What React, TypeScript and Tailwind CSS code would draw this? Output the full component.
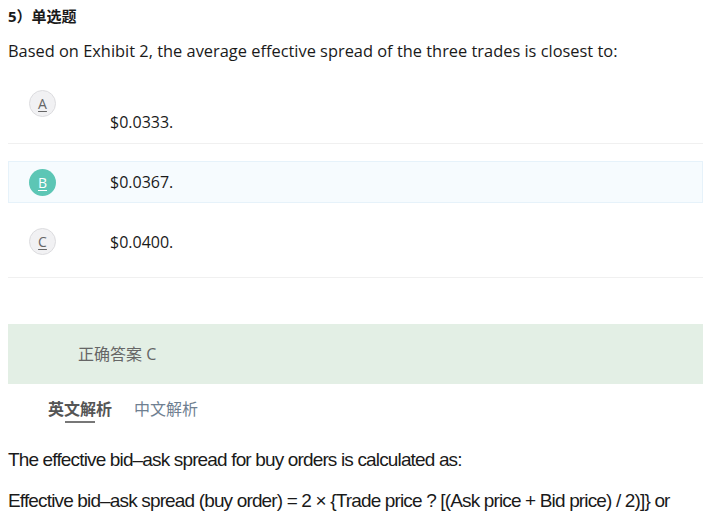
const OPTIONS = [
  { key: "A", text: "$0.0333." },
  { key: "B", text: "$0.0367." },
  { key: "C", text: "$0.0400." },
];

const FONT = { fontFamily: '"Open Sans", "Noto Sans CJK SC", sans-serif' };
const NARROW = { fontFamily: '"Liberation Sans", sans-serif' };

function Badge({ letter, selected }: { letter: string; selected: boolean }) {
  return (
    <div
      className={`flex h-[27px] w-[27px] shrink-0 items-center justify-center rounded-full text-[14px] underline underline-offset-2 ${
        selected
          ? "bg-[#5cc6b5] text-white"
          : "border border-[#dcdcdf] bg-[#f1f1f3] text-[#666]"
      }`}
    >
      {letter}
    </div>
  );
}

export default function App() {
  return (
    <div className="min-h-[521px] w-[703px] overflow-hidden bg-white text-[#1a1a1a]" style={FONT}>
      <div className="pl-2">
        <div className="flex h-[32px] items-center text-[15px] font-bold">5）单选题</div>
        <p className="flex h-[38px] items-center text-[16.4px]">
          Based on Exhibit 2, the average effective spread of the three trades is closest to:
        </p>

        {/* options */}
        <div className="mt-3">
          <div className="flex h-[62px] border-b border-[#f0f0f0] pt-2 pl-[21px]">
            <Badge letter="A" selected={false} />
            <span className="ml-[54px] mt-[20px] text-[16px] leading-[24px]">{OPTIONS[0].text}</span>
          </div>
          <div className="mt-[17px] flex h-[42px] items-center border border-[#e6f2fa] bg-[#f6fbfe] pl-[20px]">
            <Badge letter="B" selected />
            <span className="ml-[54px] text-[16px]">{OPTIONS[1].text}</span>
          </div>
          <div className="mt-[17px] flex h-[58px] items-start border-b border-[#f0f0f0] pt-[8px] pl-[21px]">
            <div className="flex items-center">
              <Badge letter="C" selected={false} />
              <span className="ml-[54px] text-[16px]">{OPTIONS[2].text}</span>
            </div>
          </div>
        </div>

        {/* answer */}
        <div className="mt-[46px] flex h-[60px] items-center bg-[#e3efe5] pl-[70px] text-[16px] text-[#666]">
          正确答案 C
        </div>

        {/* tabs */}
        <div className="flex h-[50px] items-start gap-[22px] pl-[40px] pt-[13px] text-[16px]">
          <div className="flex flex-col items-center">
            <span className="font-bold text-[#555]">英文解析</span>
            <div className="mt-[0px] h-[2px] w-[30px] bg-[#777]" />
          </div>
          <span className="text-[#6f7f91]">中文解析</span>
        </div>

        <p className="mt-[6px] text-[19px] leading-[40px] tracking-[-0.85px]" style={NARROW}>
          The effective bid–ask spread for buy orders is calculated as:
        </p>
        <p className="text-[19px] leading-[42px] tracking-[-0.85px]" style={NARROW}>
          Effective bid–ask spread (buy order) = 2 × {"{"}Trade price ? [(Ask price + Bid price) / 2)]{"}"} or
        </p>
      </div>
    </div>
  );
}
